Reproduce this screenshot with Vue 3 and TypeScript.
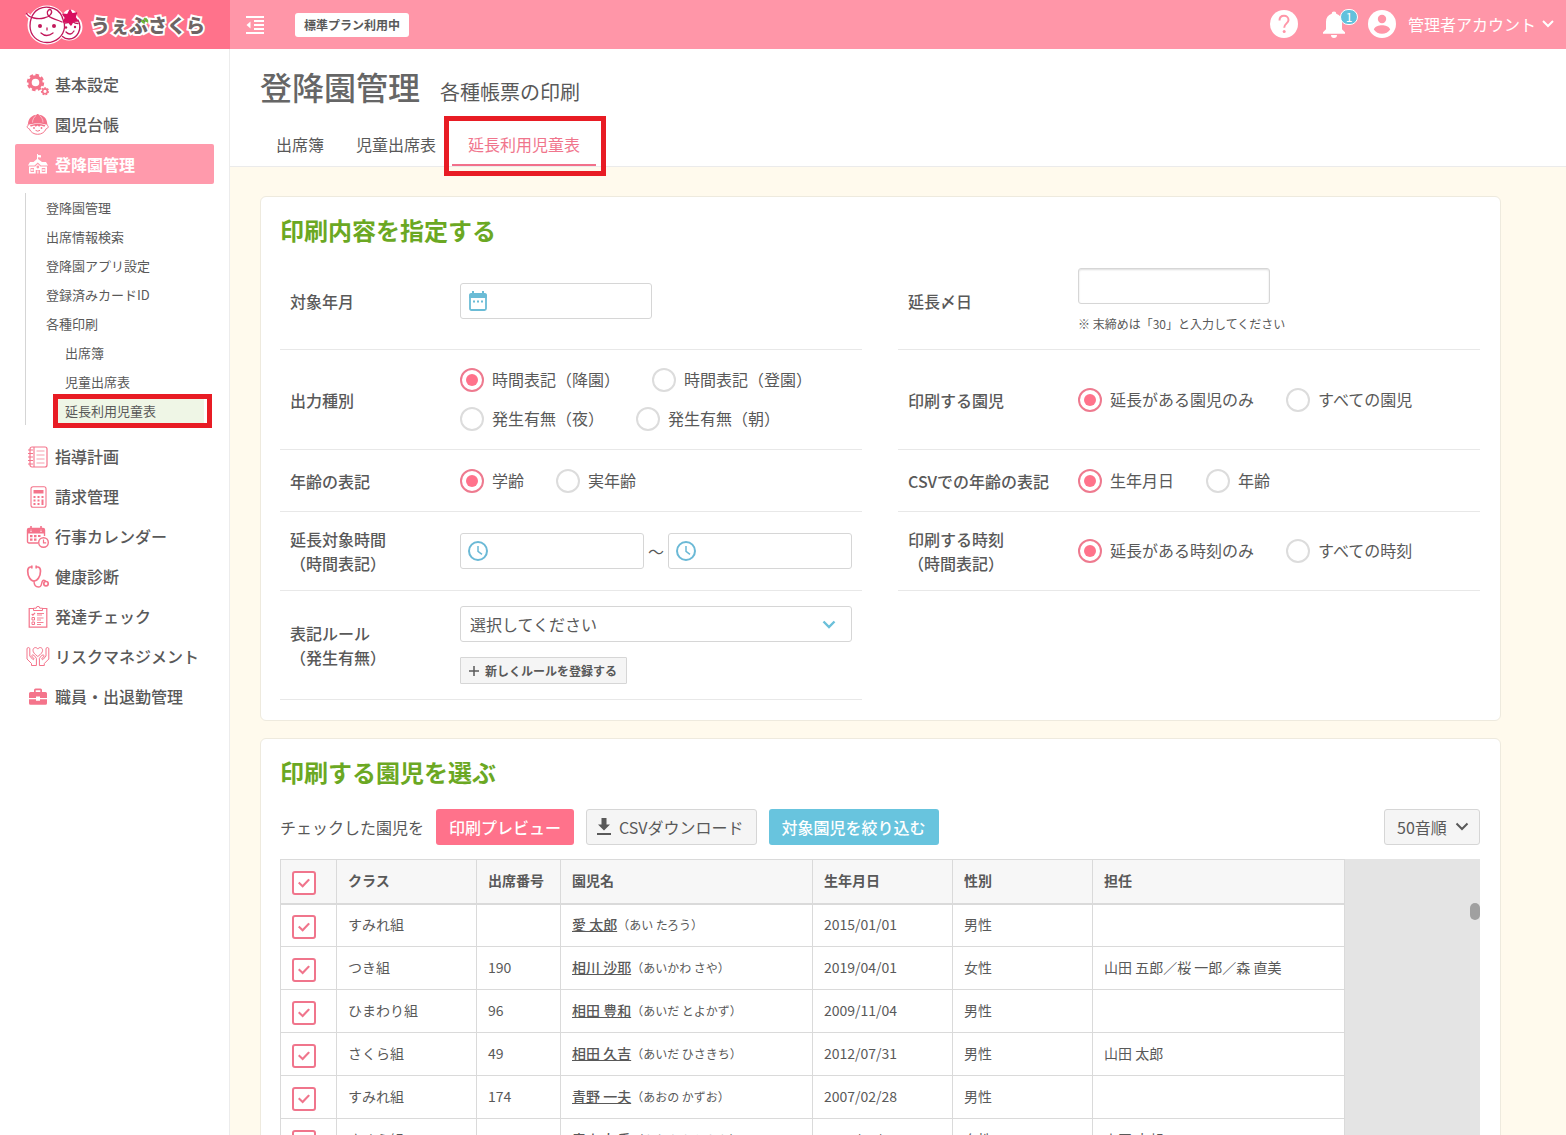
<script setup lang="ts">
import { ref } from 'vue'

interface MenuItem {
  label: string
  icon: string
  active?: boolean
}

interface SubItem {
  label: string
  nested?: boolean
  current?: boolean
}

interface Child {
  id: number
  className: string
  no: string
  name: string
  kana: string
  birthday: string
  gender: string
  teacher: string
}

const upperMenu: MenuItem[] = [
  {
    label: '基本設定',
    icon: `<g fill="none" stroke="currentColor">
      <circle cx="9.5" cy="9.5" r="5.5" stroke-width="3.4"/>
      <circle cx="9.5" cy="9.5" r="7.4" stroke-width="2.600" pathLength="16" stroke-dasharray="1.2 .8"/>
      <circle cx="19" cy="18.3" r="2.4" stroke-width="1.6"/>
      <circle cx="19" cy="18.3" r="3.5" stroke-width="1.2" pathLength="14" stroke-dasharray="1.2 .8"/></g>`,
  },
  {
    label: '園児台帳',
    icon: `<path fill="currentColor" d="M2 11.2C2 5.500 6 2 10.700 1.700L11 .9h1.400l.3.8C17.500 2 21.300 5.500 21.300 11.200l1 .9c-6-2.300-15-2.300-21.300 0z"/>
      <path d="M6.500 9.500C6.600 6.500 8 4 10 2.500M17 9.500C16.900 6.500 15.500 4 13.500 2.500" stroke="#fff" stroke-width=".5" fill="none"/>
      <path d="M2.500 12.200c-2 .4-1.600 3.200.7 3.500 1.500 3.600 4.700 5.600 8.500 5.600s7-2 8.500-5.600c2.300-.3 2.700-3.100.7-3.500" fill="none" stroke="currentColor"/>
      <path d="M4 12.200c2-1 5.500-1.300 7.700-1.300s5.700.3 7.700 1.300l-1 1.600-3.600-1.300-1.700 1.200-1.600-1.200-1.700 1.200-1.500-1.200-3.500 1.300z" fill="currentColor"/>
      <circle cx="8" cy="15" r=".9" fill="currentColor"/><circle cx="15.500" cy="15" r=".9" fill="currentColor"/>
      <path d="M9.500 17.300q2.200 1.800 4.500 0" fill="none" stroke="currentColor"/>`,
  },
  {
    label: '登降園管理',
    active: true,
    icon: `<g fill="currentColor"><path d="M11 1h1v1l3 .3v2.200l-3-.3V6l4 3h4l2 3.500h-7L11.800 9.500 8.500 12.500H2L4 9h3.500L11 6z"/>
      <path fill-rule="evenodd" d="M3 13.500h6.200L11.800 11l2.700 2.500H21V20.500h-7v-3.500h-4.300v3.500H3zM4.500 15v4H8v-4zm11.300 0v4h3.500v-4zM11.800 12.600a1.400 1.400 0 1 0 .1 2.800 1.400 1.400 0 0 0-.1-2.800z"/>
      <path d="M5 16.200h2.500v1.500H5zm11.300 0h2.500v1.500h-2.500zM11.400 17.500h1v3h-1z"/></g>`,
  },
]

const subMenu: SubItem[] = [
  { label: '登降園管理' },
  { label: '出席情報検索' },
  { label: '登降園アプリ設定' },
  { label: '登録済みカードID' },
  { label: '各種印刷' },
  { label: '出席簿', nested: true },
  { label: '児童出席表', nested: true },
  { label: '延長利用児童表', nested: true, current: true },
]

const lowerMenu: MenuItem[] = [
  {
    label: '指導計画',
    icon: `<g fill="none" stroke="currentColor"><rect x="4" y="2" width="17" height="20" rx="2" stroke-width="1.200"/>
      <path d="M8 2v20M2 5h5M2 8.500h5M2 12h5M2 15.500h5M2 19h5" stroke-width="1.100"/>
      <path d="M10.500 6h8M10.500 10h8M10.500 14h8M10.500 18h8" stroke-width=".7"/></g>`,
  },
  {
    label: '請求管理',
    icon: `<rect x="5" y="1.700" width="15" height="20.600" rx="2" fill="none" stroke="currentColor" stroke-width="1.100"/>
      <g fill="currentColor"><path d="M7.500 5h10v3.500h-10z"/>
      <path d="M7.500 11h2v2h-2zm4 0h2v2h-2zm4 0h2v2h-2zM7.500 14.500h2v2h-2zm4 0h2v2h-2zM7.500 18h2v2h-2zm4 0h2v2h-2zM15.500 14.500h2V20h-2z"/></g>`,
  },
  {
    label: '行事カレンダー',
    icon: `<g fill="none" stroke="currentColor"><path d="M12 18H3a1.500 1.500 0 0 1-1.500-1.500V5A1.500 1.500 0 0 1 3 3.500h14A1.500 1.500 0 0 1 18.500 5v6" stroke-width="1.400"/>
      <path d="M5 1v5M15 1v5" stroke-width="1.600"/><circle cx="17.500" cy="17.500" r="4.800" stroke-width="1.400"/><path d="M17.500 14.500v3.300h2.700" stroke-width="1.200"/></g>
      <path fill="currentColor" d="M1 4h3v2.500h2V4h8v2.500h2V4h3v4.500H1zM4 10h2.500v2.200H4zm4 0h2.500v2.200H8zm4 0h2.500v2H12zM4 13.500h2.500v2.200H4zm4 0h2.500v2.200H8z"/>`,
  },
  {
    label: '健康診断',
    icon: `<g fill="none" stroke="currentColor" stroke-width="1.700"><path d="M6 2H4.300Q1.700 2.500 1.700 6C1.700 11.500 4.500 16 8 16s6.500-4.500 6.500-10Q14.500 2.500 12 2h-2"/>
      <path d="M5.800.6v2.900M10.200.6v2.900"/><path d="M8 16c0 5 2.500 6 4.500 6 4.500 0 2-6.500 5.200-6.800 1.200 0 1.800.5 2 1.300" stroke-width="1.400"/><circle cx="20" cy="18.700" r="2.200"/></g>`,
  },
  {
    label: '発達チェック',
    icon: `<g fill="none" stroke="currentColor"><path d="M8 3.500H3.200v18.700h17.600V3.500H16" stroke-width="1.200"/>
      <path d="M7.500 5.500V3.200h2.700a1.800 1.800 0 0 1 3.600 0h2.700v2.300z"/><path d="M5.700 9l1.200 1.200L9 7.800" stroke-width="1.200"/>
      <path d="M6 12.500h2.500V15H6zM6 17h2.500v2.500H6z"/><path d="M11 8.500h7M11 10h5M11 13h6.500M11 15h4M11 17.500h6.500M11 19.500h4" stroke-width=".9"/></g>`,
  },
  {
    label: 'リスクマネジメント',
    icon: `<g fill="none" stroke="currentColor" stroke-width="1" stroke-linejoin="round">
      <path d="M11.800 11.500C8.500 9 7 7.300 7 5.300c0-3 3.500-3.700 4.800-1.200C13.100 1.600 16.600 2.300 16.600 5.300c0 2-1.500 3.700-4.800 6.200z"/>
      <path d="M5.500 20.500v-2L1 14V3.300Q2.400 1.800 3.800 3.300V11l2.700 3.200Q7.500 15.200 8.200 14L5.500 10.800Q6.500 9.300 8 10.300l2.400 3V20.500zM18.300 20.500v-2L22.800 14V3.300Q21.400 1.800 20 3.300V11l-2.700 3.200Q16.300 15.200 15.600 14l2.700-3.200Q17.300 9.300 15.800 10.300l-2.400 3V20.500z"/></g>`,
  },
  {
    label: '職員・出退勤管理',
    icon: `<path fill="currentColor" fill-rule="evenodd" d="M8 7V5q0-1.500 1.500-1.500h5Q16 3.500 16 5v2h3.500Q21 7 21 8.500V13h-7v-1.500h-4V13H3V8.500Q3 7 4.500 7zm1.700 0h4.600V5.200H9.700zM3 14.200h7v1.600h4v-1.600h7v4q0 1.500-1.500 1.500h-15Q3 19.700 3 18.200z"/>`,
  },
]

const tabs = ['出席簿', '児童出席表', '延長利用児童表']
const columns = ['クラス', '出席番号', '園児名', '生年月日', '性別', '担任']

const outputTypes = ['時間表記（降園）', '時間表記（登園）', '発生有無（夜）', '発生有無（朝）']
const outputType = ref(outputTypes[0])
const childTargets = ['延長がある園児のみ', 'すべての園児']
const childTarget = ref(childTargets[0])
const ageNotations = ['学齢', '実年齢']
const ageNotation = ref(ageNotations[0])
const csvAges = ['生年月日', '年齢']
const csvAge = ref(csvAges[0])
const timeTargets = ['延長がある時刻のみ', 'すべての時刻']
const timeTarget = ref(timeTargets[0])

const children: Child[] = [
  { id: 1, className: 'すみれ組', no: '', name: '愛 太郎', kana: 'あい たろう', birthday: '2015/01/01', gender: '男性', teacher: '' },
  { id: 2, className: 'つき組', no: '190', name: '相川 沙耶', kana: 'あいかわ さや', birthday: '2019/04/01', gender: '女性', teacher: '山田 五郎／桜 一郎／森 直美' },
  { id: 3, className: 'ひまわり組', no: '96', name: '相田 豊和', kana: 'あいだ とよかず', birthday: '2009/11/04', gender: '男性', teacher: '' },
  { id: 4, className: 'さくら組', no: '49', name: '相田 久吉', kana: 'あいだ ひさきち', birthday: '2012/07/31', gender: '男性', teacher: '山田 太郎' },
  { id: 5, className: 'すみれ組', no: '174', name: '青野 一夫', kana: 'あおの かずお', birthday: '2007/02/28', gender: '男性', teacher: '' },
  { id: 6, className: 'さくら組', no: '50', name: '青山 友香', kana: 'あおやま ともか', birthday: '2012/05/10', gender: '女性', teacher: '山田 太郎' },
]
const checked = ref<number[]>(children.map((c) => c.id))
const allChecked = ref(true)

function toggleAll() {
  checked.value = allChecked.value ? children.map((c) => c.id) : []
}
</script>

<template>
  <div class="app">
    <header class="topbar">
      <a href="#" class="brand">
        <svg class="brand-mark" viewBox="0 0 60 44" aria-hidden="true">
          <g fill="#fff" stroke="#fff" stroke-width="3">
            <circle cx="23" cy="22" r="18" /><circle cx="45" cy="24" r="12" /><circle cx="46" cy="14" r="6" />
            <path d="M3 11q3 5 9 3" fill="none" stroke-width="4" />
          </g>
          <g transform="translate(0 -1)">
            <g fill="none" stroke="#c2185b" stroke-width="1.300" stroke-linecap="round">
              <path d="M7 17C10 7 19 4 26 5.500c6 1 10 4.500 12 9 .7 3.500 3 5 2.500 11C39.500 34 32 40.500 23 40.500 13 40.500 6 33 6 24q0-4 1-7z" />
              <path d="M2.500 11.500C5 16 14 17.500 20 16c6-1.500 9-5 7-8-1.500-1.500-4.500 1-3.500 4 1.500 5 8 4.500 14.500 8" />
              <path d="M54 18C59 27 53 37 45 37c-3 0-5-1-6.500-2.500" />
              <path d="M41 21q4 0 5-2M49 20q2 1.500 5 1.500M17 31q5.500 5 12 0M42 30q4.500 4.500 8-1M23 26v2" />
            </g>
            <g fill="#c2185b">
              <circle cx="16" cy="24" r="2" /><circle cx="30" cy="24" r="2" /><circle cx="42" cy="25.500" r="1.200" /><circle cx="51" cy="25" r="1.200" />
            </g>
            <path d="M46 8l2.200 4 4.300-1-1.500 4.200 2.500 3.800-4.500.2L47 23l-3-3.500-4.500.3 2-4-2.500-3.600 4.700.5z" fill="#d80f5f" stroke="#d80f5f" stroke-width="1.500" stroke-linejoin="round" />
          </g>
        </svg>
        <span class="brand-name">うぇぶさくら
          <svg class="leaf" viewBox="0 0 8 8" aria-hidden="true"><path d="M0 3.500Q3 2.500 3.500 6.500 1 6.500 0 3.500zM3 1Q7 1 7 5.500 3.500 4.500 3 1z" fill="#6dbb2c" stroke="#6dbb2c" stroke-width=".6" /></svg>
        </span>
      </a>
      <div class="topbar-main">
        <button type="button" class="icon-button" aria-label="メニューを閉じる">
          <svg width="18" height="18" viewBox="0 0 18 18"><path d="M0 1h18M8 5h10M8 9h10M8 13h10M0 17h18" stroke="#fff" stroke-width="2" /><path d="M4.500 5.500v7L.5 9z" fill="#fff" /></svg>
        </button>
        <span class="plan">標準プラン利用中</span>
        <div class="account-area">
          <button type="button" class="icon-button" aria-label="ヘルプ">
            <svg width="28" height="28" viewBox="0 0 28 28"><circle cx="14" cy="14" r="14" fill="#fff" /><path d="M9.500 10.500C9.500 7.500 11.500 5.800 14 5.800s4.500 1.700 4.500 4.300c0 3.200-4.300 3.500-4.300 7.600" fill="none" stroke="#ff96a8" stroke-width="2" /><circle cx="14.200" cy="21.500" r="1.500" fill="#ff96a8" /></svg>
          </button>
          <button type="button" class="icon-button bell" aria-label="お知らせ">
            <svg width="24" height="28" viewBox="0 0 24 28"><path d="M9.700 3.800a2.300 2.300 0 0 1 4.600 0c3.800 1.200 5.700 4 5.700 8v7.500l3 3v1.500H1v-1.500l3-3v-7.500c0-4 1.900-6.800 5.700-8zM9 25h6a3 3 0 0 1-6 0z" fill="#fff" /></svg>
            <span class="badge">1</span>
          </button>
          <button type="button" class="account">
            <svg width="28" height="28" viewBox="0 0 28 28"><circle cx="14" cy="14" r="14" fill="#fff" /><circle cx="14" cy="9" r="4.200" fill="#ff96a8" /><path d="M5.800 19.500c1-3 5-4.300 8.200-4.300s7.200 1.300 8.200 4.300c-1.800 2.700-4.800 4.300-8.200 4.300s-6.400-1.600-8.200-4.300z" fill="#ff96a8" /></svg>
            <span>管理者アカウント</span>
            <svg width="12" height="8" viewBox="0 0 12 8"><path d="M1 1l5 5 5-5" fill="none" stroke="#fff" stroke-width="2" /></svg>
          </button>
        </div>
      </div>
    </header>

    <div class="body">
      <nav class="sidebar">
        <a v-for="item in upperMenu" :key="item.label" href="#" class="menu-item" :class="{ active: item.active }">
          <svg viewBox="0 0 24 24" width="24" height="24" aria-hidden="true" v-html="item.icon"></svg>{{ item.label }}
        </a>
        <div class="submenu">
          <a v-for="(item, i) in subMenu" :key="i" href="#" class="sub-item" :class="{ nested: item.nested }">
            <span v-if="item.current" class="current">{{ item.label }}<span class="marker sub-marker"></span></span>
            <template v-else>{{ item.label }}</template>
          </a>
        </div>
        <a v-for="item in lowerMenu" :key="item.label" href="#" class="menu-item">
          <svg viewBox="0 0 24 24" width="24" height="24" aria-hidden="true" v-html="item.icon"></svg>{{ item.label }}
        </a>
      </nav>

      <main class="main">
        <div class="page-head">
          <div class="titles">
            <h1>登降園管理</h1>
            <span class="subtitle">各種帳票の印刷</span>
          </div>
          <div class="tabs">
            <a v-for="(tab, i) in tabs" :key="tab" href="#" class="tab" :class="{ selected: i === 2 }">{{ tab }}<span v-if="i === 2" class="marker tab-marker"></span></a>
          </div>
        </div>

        <div class="content">
          <section class="panel">
            <h2>印刷内容を指定する</h2>
            <div class="form">
              <div class="row">
                <label class="row-label" for="month">対象年月</label>
                <div class="row-body">
                  <div class="field short">
                    <svg width="20" height="20" viewBox="0 0 20 20"><path d="M2 4.500h16v13q0 1.500-1.500 1.500h-13Q2 19 2 17.500z" fill="none" stroke="#6bbcd6" stroke-width="1.800" /><path d="M1.200 3.500Q1.200 2 3 2h1V0h2v2h8V0h2v2h1q1.800 0 1.800 1.500V7H1.200zM5 9.500h2v2H5zm4 0h2v2H9zm4 0h2v2h-2z" fill="#6bbcd6" /></svg>
                    <input id="month" type="text" />
                  </div>
                </div>
              </div>
              <div class="row">
                <label class="row-label" for="closing">延長〆日</label>
                <div class="row-body stack note-stack">
                  <div class="field short inset"><input id="closing" type="text" /></div>
                  <p class="note">※ 末締めは「30」と入力してください</p>
                </div>
              </div>

              <div class="row">
                <span class="row-label">出力種別</span>
                <div class="row-body radios">
                  <label v-for="o in outputTypes" :key="o" class="radio"><input v-model="outputType" type="radio" name="output" :value="o" /><span>{{ o }}</span></label>
                </div>
              </div>
              <div class="row">
                <span class="row-label">印刷する園児</span>
                <div class="row-body radios">
                  <label v-for="o in childTargets" :key="o" class="radio"><input v-model="childTarget" type="radio" name="target" :value="o" /><span>{{ o }}</span></label>
                </div>
              </div>

              <div class="row">
                <span class="row-label">年齢の表記</span>
                <div class="row-body radios">
                  <label v-for="o in ageNotations" :key="o" class="radio"><input v-model="ageNotation" type="radio" name="age" :value="o" /><span>{{ o }}</span></label>
                </div>
              </div>
              <div class="row">
                <span class="row-label">CSVでの年齢の表記</span>
                <div class="row-body radios">
                  <label v-for="o in csvAges" :key="o" class="radio"><input v-model="csvAge" type="radio" name="csv" :value="o" /><span>{{ o }}</span></label>
                </div>
              </div>

              <div class="row">
                <span class="row-label">延長対象時間<br />（時間表記）</span>
                <div class="row-body range">
                  <div class="field">
                    <svg width="20" height="20" viewBox="0 0 20 20"><circle cx="10" cy="10" r="9" fill="none" stroke="#6bb9d6" stroke-width="2" /><path d="M10 5v5.300l4 3" fill="none" stroke="#6bb9d6" stroke-width="1.500" /></svg>
                    <input type="text" aria-label="開始時刻" />
                  </div>
                  <span class="tilde">～</span>
                  <div class="field">
                    <svg width="20" height="20" viewBox="0 0 20 20"><circle cx="10" cy="10" r="9" fill="none" stroke="#6bb9d6" stroke-width="2" /><path d="M10 5v5.300l4 3" fill="none" stroke="#6bb9d6" stroke-width="1.500" /></svg>
                    <input type="text" aria-label="終了時刻" />
                  </div>
                </div>
              </div>
              <div class="row">
                <span class="row-label">印刷する時刻<br />（時間表記）</span>
                <div class="row-body radios">
                  <label v-for="o in timeTargets" :key="o" class="radio"><input v-model="timeTarget" type="radio" name="time" :value="o" /><span>{{ o }}</span></label>
                </div>
              </div>

              <div class="row">
                <label class="row-label" for="rule">表記ルール<br />（発生有無）</label>
                <div class="row-body stack">
                  <div class="select">
                    <select id="rule"><option>選択してください</option></select>
                    <svg width="14" height="10" viewBox="0 0 14 10"><path d="M1.500 1.500L7 7l5.500-5.500" fill="none" stroke="#6bc0da" stroke-width="2.400" /></svg>
                  </div>
                  <button type="button" class="add">
                    <svg width="10" height="10" viewBox="0 0 10 10"><path d="M5 0v10M0 5h10" stroke="#595959" stroke-width="1.500" /></svg>新しくルールを登録する
                  </button>
                </div>
              </div>
            </div>
          </section>

          <section class="panel">
            <h2>印刷する園児を選ぶ</h2>
            <div class="toolbar">
              <span>チェックした園児を</span>
              <button type="button" class="btn pink">印刷プレビュー</button>
              <button type="button" class="btn gray">
                <svg width="16" height="18" viewBox="0 0 16 18"><path d="M5.500 0h5v6.500H14l-6 6-6-6h3.500zM1 15h14v2H1z" fill="#595959" /></svg>CSVダウンロード
              </button>
              <button type="button" class="btn blue">対象園児を絞り込む</button>
              <div class="select sort">
                <select aria-label="並び順"><option>50音順</option></select>
                <svg width="14" height="10" viewBox="0 0 14 10"><path d="M1.500 1.500L7 7l5.500-5.500" fill="none" stroke="#595959" stroke-width="2" /></svg>
              </div>
            </div>
            <div class="table-area">
              <table>
                <colgroup>
                  <col class="c-check" /><col class="c-mid" /><col class="c-no" /><col class="c-wide" /><col class="c-mid" /><col class="c-mid" /><col class="c-wide" />
                </colgroup>
                <thead>
                  <tr>
                    <th><input v-model="allChecked" type="checkbox" aria-label="すべて選択" @change="toggleAll" /></th>
                    <th v-for="c in columns" :key="c" scope="col">{{ c }}</th>
                  </tr>
                </thead>
                <tbody>
                  <tr v-for="c in children" :key="c.id">
                    <td><input v-model="checked" type="checkbox" :value="c.id" :aria-label="c.name" /></td>
                    <td>{{ c.className }}</td>
                    <td>{{ c.no }}</td>
                    <td><a href="#" class="name">{{ c.name }}</a><span class="kana">（{{ c.kana }}）</span></td>
                    <td>{{ c.birthday }}</td>
                    <td>{{ c.gender }}</td>
                    <td>{{ c.teacher }}</td>
                  </tr>
                </tbody>
              </table>
              <span class="thumb"></span>
            </div>
          </section>
        </div>
      </main>
    </div>
  </div>
</template>

<style>
body {
  margin: 0;
}
</style>

<style scoped>
.app,
.app *,
.app *::before {
  box-sizing: border-box;
}
.app {
  display: flex;
  flex-direction: column;
  height: 100vh;
  overflow: hidden;
  font-family: 'Noto Sans CJK JP', sans-serif;
  font-size: 16px;
  line-height: 24px;
  color: #595959;
}
a {
  color: inherit;
  text-decoration: none;
}
button,
input,
select {
  font: inherit;
  color: inherit;
}
button {
  border: 0;
  padding: 0;
  background: none;
}
h1,
h2,
p {
  margin: 0;
}
svg {
  flex: none;
  display: block;
}

/* top bar */
.topbar {
  display: flex;
  flex: none;
  height: 49px;
  background: #ff96a8;
}
.brand {
  display: flex;
  align-items: center;
  flex: none;
  width: 230px;
  padding-left: 24px;
  gap: 7px;
  background: #ff728b;
}
.brand-mark {
  width: 60px;
  height: 44px;
}
.brand-name {
  position: relative;
  font-size: 19px;
  font-weight: 900;
  color: #6e6464;
  -webkit-text-stroke: 4px #fff;
  paint-order: stroke fill;
}
.leaf {
  position: absolute;
  left: 50px;
  top: 4px;
  width: 8px;
  height: 8px;
}
.topbar-main {
  display: flex;
  align-items: center;
  flex: 1;
  padding: 0 12px 0 16px;
}
.plan {
  margin-left: 31px;
  padding: 0 9px;
  border-radius: 3px;
  background: #fff;
  font-size: 12px;
  font-weight: 700;
}
.account-area {
  display: flex;
  align-items: center;
  margin-left: auto;
  padding-bottom: 2px;
  gap: 24px;
}
.bell {
  position: relative;
}
.badge {
  position: absolute;
  left: 18px;
  top: -1px;
  width: 18px;
  height: 16px;
  border: 1px solid #fff;
  border-radius: 8px;
  background: #62c1dc;
  color: #fff;
  font-size: 12px;
  line-height: 14px;
}
.account {
  display: flex;
  align-items: center;
  margin-left: -2px;
  gap: 12px;
  color: #fff;
}
.account svg:last-child {
  margin-left: -6px;
}

/* side menu */
.body {
  display: flex;
  flex: 1;
  min-height: 0;
}
.sidebar {
  flex: none;
  width: 230px;
  padding: 15px 15px 0;
  border-right: 1px solid #ececec;
  background: #fff;
}
.menu-item {
  display: flex;
  align-items: center;
  height: 40px;
  padding: 0 11px;
  gap: 5px;
  border-radius: 2px;
  font-weight: 500;
  white-space: nowrap;
}
.menu-item svg {
  margin-top: 2px;
  color: #f4748b;
}
.menu-item.active {
  background: #ff9aac;
  color: #fff;
  font-weight: 700;
}
.menu-item.active svg {
  color: #fff;
}
.submenu {
  margin: 9px 0 11px 10px;
  border-left: 1px solid #d5d5d5;
}
.sub-item {
  display: flex;
  align-items: center;
  height: 29px;
  padding-left: 20px;
  font-size: 13px;
}
.sub-item.nested {
  padding-left: 32px;
}
.sub-item.nested:not(:last-child) {
  padding-left: 39px;
}
.current {
  position: relative;
  width: 146px;
  padding-left: 7px;
  background: #eff6e6;
}
.marker {
  position: absolute;
  border: 5px solid #e81c24;
  pointer-events: none;
}
.sub-marker {
  inset: -5px -8px -5px -5px;
}

/* page head */
.main {
  flex: 1;
  min-width: 0;
  background: #fffaed;
}
.page-head {
  padding: 13px 30px 0;
  border-bottom: 1px solid #ebebeb;
  background: #fff;
}
.titles {
  display: flex;
  align-items: baseline;
  gap: 20px;
}
h1 {
  font-size: 32px;
  font-weight: 500;
  line-height: 48px;
  color: #666;
}
.subtitle {
  font-size: 20px;
}
.tabs {
  display: flex;
  margin-top: 14px;
}
.tab {
  position: relative;
  height: 42px;
  padding: 8px 16px;
  border-bottom: 2px solid transparent;
}
.tab.selected {
  border-color: #f2708a;
  color: #f0758c;
}
.tab-marker {
  inset: -8px -10px -12px -8px;
}

/* panels */
.content {
  display: flex;
  flex-direction: column;
  gap: 17px;
  padding: 29px 65px 0 30px;
}
.panel {
  padding: 15px 20px 20px 19px;
  border: 1px solid #eeeade;
  border-radius: 6px;
  background: #fff;
}
h2 {
  margin-bottom: 5px;
  font-size: 24px;
  line-height: 36px;
  font-weight: 700;
  color: #6ba823;
}
.form {
  display: grid;
  grid-template-columns: repeat(2, minmax(0, 1fr));
  column-gap: 36px;
}
.row {
  display: flex;
  align-items: center;
  min-height: 62px;
  padding: 15px 10px;
  border-bottom: 1px solid #e8e8e8;
}
.row-label {
  flex: none;
  width: 170px;
  font-weight: 500;
}
.row-body {
  flex: 1;
  min-width: 0;
}
.stack {
  display: flex;
  flex-direction: column;
  align-items: flex-start;
  gap: 15px;
}
.note-stack {
  gap: 9px;
}
.field {
  display: flex;
  align-items: center;
  flex: 1;
  min-width: 0;
  height: 36px;
  padding-left: 7px;
  border: 1px solid #d6d6d6;
  border-radius: 3px;
  background: #fff;
}
.field input {
  flex: 1;
  min-width: 0;
  height: 100%;
  border: 0;
  outline: 0;
  background: none;
}
.short {
  flex: none;
  width: 192px;
}
.inset {
  box-shadow: inset 0 1px 2px #ddd;
}
.note {
  font-size: 12px;
  line-height: 21px;
}
.radios {
  display: flex;
  flex-wrap: wrap;
  gap: 9px 32px;
}
.radio {
  display: flex;
  align-items: center;
  height: 30px;
  gap: 8px;
  white-space: nowrap;
}
.radio span {
  padding-bottom: 2px;
}
.radio input {
  display: grid;
  place-items: center;
  appearance: none;
  width: 24px;
  height: 24px;
  margin: 0;
  border: 2px solid #dcdcdc;
  border-radius: 50%;
  background: #fff;
}
.radio input:checked {
  border-color: #ee7a8f;
}
.radio input:checked::before {
  content: '';
  width: 12px;
  height: 12px;
  border-radius: 50%;
  background: #ff728b;
}
.range {
  display: flex;
  align-items: center;
}
.tilde {
  width: 24px;
  text-align: center;
}
.select {
  position: relative;
  width: 100%;
  height: 36px;
}
.select select {
  appearance: none;
  width: 100%;
  height: 36px;
  padding: 0 9px;
  border: 1px solid #d6d6d6;
  border-radius: 3px;
  background: #fff;
}
.select svg {
  position: absolute;
  right: 16px;
  top: 14px;
  pointer-events: none;
}
.add {
  display: flex;
  align-items: center;
  height: 27px;
  padding: 0 9px 0 8px;
  gap: 6px;
  border: 1px solid #d6d6d6;
  border-radius: 1px;
  background: #f5f5f5;
  font-size: 12px;
  font-weight: 700;
}

/* children list */
.toolbar {
  display: flex;
  align-items: center;
  margin: 19px 0 14px;
  gap: 12px;
  white-space: nowrap;
}
.btn {
  display: flex;
  align-items: center;
  height: 36px;
  padding: 0 13px;
  border-radius: 3px;
  font-weight: 500;
  color: #fff;
}
.pink {
  background: #ff728b;
}
.blue {
  background: #68c4de;
}
.gray {
  padding: 0 12px 0 9px;
  gap: 7px;
  border: 1px solid #d6d6d6;
  background: #f5f5f5;
  color: #595959;
  font-weight: 400;
}
.sort {
  width: 96px;
  margin-left: auto;
}
.sort select {
  padding: 0 12px;
  background: #f5f5f5;
}
.sort svg {
  right: 11px;
  top: 13px;
}
.table-area {
  position: relative;
  background: #e4e4e4;
}
table {
  width: 1065px;
  border-collapse: collapse;
  table-layout: fixed;
  background: #fff;
  font-size: 14px;
}
.c-check {
  width: 56px;
}
.c-mid {
  width: 140px;
}
.c-no {
  width: 84px;
}
.c-wide {
  width: 252px;
}
th,
td {
  height: 43px;
  padding: 0 11px 2px;
  border: 1px solid #dadada;
  text-align: left;
  white-space: nowrap;
}
th {
  height: 44px;
  border-bottom-width: 2px;
  background: #f7f7f7;
  font-weight: 700;
}
table input {
  display: grid;
  place-items: center;
  appearance: none;
  width: 24px;
  height: 24px;
  margin: 6px 0 0;
  border: 2px solid #f0758c;
  border-radius: 3px;
  background: #fff;
}
table input:checked::before {
  content: '';
  width: 12px;
  height: 10px;
  background: #f0758c;
  clip-path: polygon(0 50%, 12% 36%, 38% 64%, 86% 4%, 100% 18%, 39% 94%);
}
.name {
  font-weight: 500;
  text-decoration: underline;
}
.kana {
  font-size: 12px;
}
.thumb {
  position: absolute;
  right: 0;
  top: 44px;
  width: 10px;
  height: 17px;
  border-radius: 5px;
  background: #a0a0a0;
}
</style>
